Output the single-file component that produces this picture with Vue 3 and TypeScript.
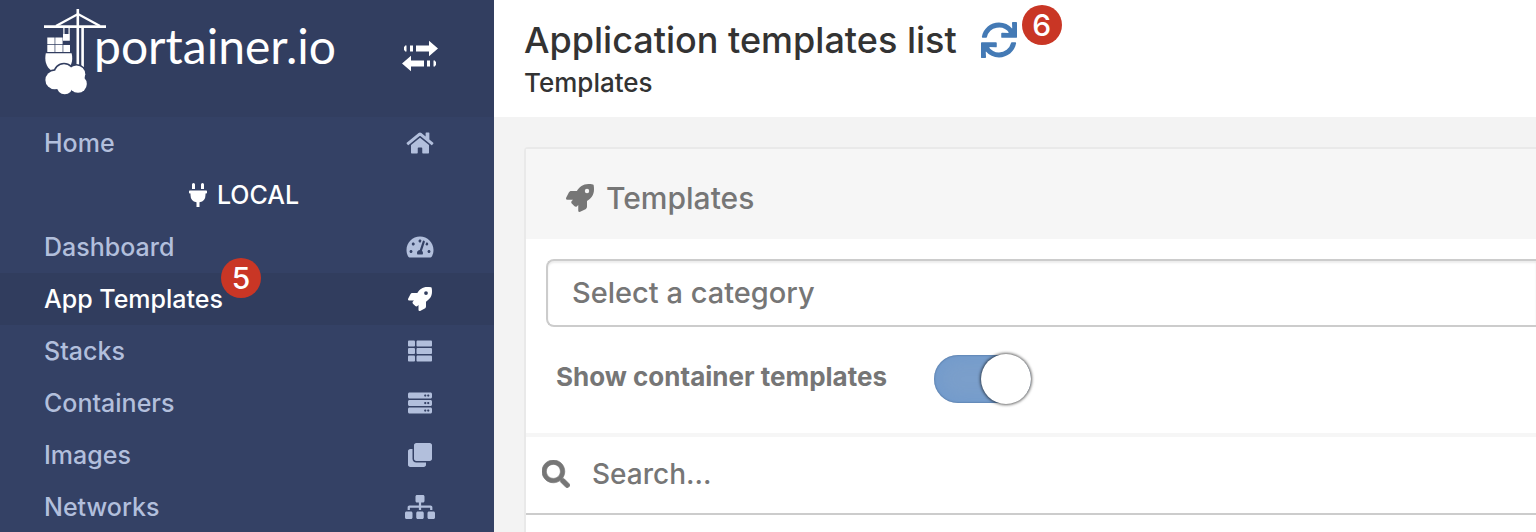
<script setup lang="ts">
import { ref } from 'vue'

interface Glyph {
  w: number
  d: string
}

interface NavItem {
  label: string
  icon: string
  badge?: string
}

const rocket: Glyph = {
  w: 512,
  d: 'M505.12019,19.09375c-1.18945-5.53125-6.65819-11-12.207-12.1875C460.716,0,435.507,0,410.40747,0,307.17523,0,245.26909,55.20312,199.05238,128H94.83772c-16.34763.01562-35.55658,11.875-42.88664,26.48438L2.51562,253.29688A28.4,28.4,0,0,0,0,264a24.00867,24.00867,0,0,0,24.00582,24H127.81618l-22.47457,22.46875c-11.36521,11.36133-12.99607,32.25781,0,45.25L156.24582,406.625c11.15623,11.1875,32.15619,13.15625,45.27726,0l22.47457-22.46875V488a24.00867,24.00867,0,0,0,24.00581,24,28.55934,28.55934,0,0,0,10.707-2.51562l98.72834-49.39063c14.62888-7.29687,26.50776-26.5,26.50776-42.85937V312.79688c72.59753-46.3125,128.03493-108.40626,128.03493-211.09376C512.07526,76.5,512.07526,51.29688,505.12019,19.09375ZM384.04033,168A40,40,0,1,1,424.05,128,40.02322,40.02322,0,0,1,384.04033,168Z'
}

const icons: Record<string, Glyph> = {
  home: {
    w: 576,
    d: 'M280.37 148.26L96 300.11V464a16 16 0 0 0 16 16l112.06-.29a16 16 0 0 0 15.92-16V368a16 16 0 0 1 16-16h64a16 16 0 0 1 16 16v95.64a16 16 0 0 0 16 16.05L464 480a16 16 0 0 0 16-16V300L295.67 148.26a12.19 12.19 0 0 0-15.3 0zM571.6 251.47L488 182.56V44.05a12 12 0 0 0-12-12h-56a12 12 0 0 0-12 12v72.61L318.47 43a48 48 0 0 0-61 0L4.34 251.47a12 12 0 0 0-1.6 16.9l25.5 31A12 12 0 0 0 45.15 301l235.22-193.74a12.19 12.19 0 0 1 15.3 0L530.9 301a12 12 0 0 0 16.9-1.6l25.5-31a12 12 0 0 0-1.7-16.93z'
  },
  dashboard: {
    w: 576,
    d: 'M288 32C128.94 32 0 160.94 0 320c0 52.8 14.25 102.26 39.06 144.8 5.61 9.62 16.3 15.2 27.44 15.2h443c11.14 0 21.83-5.58 27.44-15.2C561.75 422.26 576 372.8 576 320c0-159.06-128.94-288-288-288zm0 64c14.71 0 26.58 10.13 30.32 23.65-1.11 2.26-2.64 4.23-3.45 6.67l-9.22 27.67c-5.13 3.49-10.97 6.01-17.64 6.01-17.67 0-32-14.33-32-32S270.33 96 288 96zM96 384c-17.67 0-32-14.33-32-32s14.33-32 32-32 32 14.33 32 32-14.33 32-32 32zm48-160c-17.67 0-32-14.33-32-32s14.33-32 32-32 32 14.33 32 32-14.33 32-32 32zm246.77-72.41l-61.33 184C343.13 347.33 352 364.54 352 384c0 11.72-3.38 22.55-8.88 32H232.88c-5.5-9.45-8.88-20.28-8.88-32 0-33.94 26.5-61.43 59.9-63.59l61.34-184.01c4.17-12.56 17.73-19.45 30.36-15.17 12.57 4.19 19.35 17.79 15.17 30.36zm14.66 57.2l15.52-46.55c3.47-1.29 7.13-2.23 11.05-2.23 17.67 0 32 14.33 32 32s-14.33 32-32 32c-11.38-.01-20.89-6.28-26.57-15.22zM480 384c-17.67 0-32-14.33-32-32s14.33-32 32-32 32 14.33 32 32-14.33 32-32 32z'
  },
  rocket,
  list: {
    w: 512,
    d: 'M149.333 216v80c0 13.255-10.745 24-24 24H24c-13.255 0-24-10.745-24-24v-80c0-13.255 10.745-24 24-24h101.333c13.255 0 24 10.745 24 24zM0 376v80c0 13.255 10.745 24 24 24h101.333c13.255 0 24-10.745 24-24v-80c0-13.255-10.745-24-24-24H24c-13.255 0-24 10.745-24 24zM125.333 32H24C10.745 32 0 42.745 0 56v80c0 13.255 10.745 24 24 24h101.333c13.255 0 24-10.745 24-24V56c0-13.255-10.745-24-24-24zm80 448H488c13.255 0 24-10.745 24-24v-80c0-13.255-10.745-24-24-24H205.333c-13.255 0-24 10.745-24 24v80c0 13.255 10.745 24 24 24zm-24-424v80c0 13.255 10.745 24 24 24H488c13.255 0 24-10.745 24-24V56c0-13.255-10.745-24-24-24H205.333c-13.255 0-24 10.745-24 24zm24 264H488c13.255 0 24-10.745 24-24v-80c0-13.255-10.745-24-24-24H205.333c-13.255 0-24 10.745-24 24v80c0 13.255 10.745 24 24 24z'
  },
  server: {
    w: 512,
    d: 'M480 160H32c-17.673 0-32-14.327-32-32V64c0-17.673 14.327-32 32-32h448c17.673 0 32 14.327 32 32v64c0 17.673-14.327 32-32 32zm-48-88c-13.255 0-24 10.745-24 24s10.745 24 24 24 24-10.745 24-24-10.745-24-24-24zm-64 0c-13.255 0-24 10.745-24 24s10.745 24 24 24 24-10.745 24-24-10.745-24-24-24zm112 248H32c-17.673 0-32-14.327-32-32v-64c0-17.673 14.327-32 32-32h448c17.673 0 32 14.327 32 32v64c0 17.673-14.327 32-32 32zm-48-88c-13.255 0-24 10.745-24 24s10.745 24 24 24 24-10.745 24-24-10.745-24-24-24zm-64 0c-13.255 0-24 10.745-24 24s10.745 24 24 24 24-10.745 24-24-10.745-24-24-24zm112 248H32c-17.673 0-32-14.327-32-32v-64c0-17.673 14.327-32 32-32h448c17.673 0 32 14.327 32 32v64c0 17.673-14.327 32-32 32zm-48-88c-13.255 0-24 10.745-24 24s10.745 24 24 24 24-10.745 24-24-10.745-24-24-24zm-64 0c-13.255 0-24 10.745-24 24s10.745 24 24 24 24-10.745 24-24-10.745-24-24-24z'
  },
  clone: {
    w: 512,
    d: 'M464 0c26.51 0 48 21.49 48 48v288c0 26.51-21.49 48-48 48H176c-26.51 0-48-21.49-48-48V48c0-26.51 21.49-48 48-48h288M176 416c-44.112 0-80-35.888-80-80V128H48c-26.51 0-48 21.49-48 48v288c0 26.51 21.49 48 48 48h288c26.51 0 48-21.49 48-48v-48H176z'
  },
  sitemap: {
    w: 640,
    d: 'M128 352H32c-17.67 0-32 14.33-32 32v96c0 17.67 14.33 32 32 32h96c17.67 0 32-14.33 32-32v-96c0-17.67-14.33-32-32-32zm-24-80h192v48h48v-48h192v48h48v-57.59c0-21.17-17.23-38.41-38.41-38.41H344v-64h40c17.67 0 32-14.33 32-32V32c0-17.67-14.33-32-32-32H256c-17.67 0-32 14.33-32 32v96c0 17.67 14.33 32 32 32h40v64H94.41C73.23 224 56 241.23 56 262.41V320h48v-48zm264 80h-96c-17.67 0-32 14.33-32 32v96c0 17.67 14.33 32 32 32h96c17.67 0 32-14.33 32-32v-96c0-17.67-14.33-32-32-32zm240 0h-96c-17.67 0-32 14.33-32 32v96c0 17.67 14.33 32 32 32h96c17.67 0 32-14.33 32-32v-96c0-17.67-14.33-32-32-32z'
  }
}

const homeItems: NavItem[] = [{ label: 'Home', icon: 'home' }]
const localItems: NavItem[] = [
  { label: 'Dashboard', icon: 'dashboard' },
  { label: 'App Templates', icon: 'rocket', badge: '5' },
  { label: 'Stacks', icon: 'list' },
  { label: 'Containers', icon: 'server' },
  { label: 'Images', icon: 'clone' },
  { label: 'Networks', icon: 'sitemap' }
]

const active = ref('App Templates')
const category = ref('')
const showContainers = ref(true)
const search = ref('')
</script>

<template>
  <div class="app">
    <aside class="sidebar">
      <header class="brand">
        <a href="#" class="logo" aria-label="portainer.io">
          <svg class="crane" viewBox="0 0 62 88" fill="currentColor" aria-hidden="true">
            <path d="M0 17.300h62v2.600H0z" />
            <path d="M32.500 1h2.600v57h-2.600zM37.300 19h2.600v40h-2.600z" />
            <path d="M12 18 34 6l22 12" fill="none" stroke="currentColor" stroke-width="2.400" />
            <path d="M19.300 19h1.200v7h-1.200zM24.500 19h1.200v7h-1.200zM19 26h6.800v6.800H19zM3.300 29.500h7.300v6.800H3.300zM11.300 29.500h7.300v6.800h-7.300zM3.300 37h7.300v7H3.300zM11.300 37h7.300v7h-7.300zM19.300 37H26v7h-6.700z" />
            <path d="M1.800 45.300h25.800C29.500 53 27 59 22 63H8C1.500 59 .5 52 1.800 45.300z" />
            <g class="cloud-edge">
              <circle cx="10.700" cy="72" r="9.300" />
              <circle cx="20" cy="65.500" r="9.300" />
              <circle cx="32.500" cy="66.300" r="8.800" />
              <circle cx="34" cy="76" r="8.800" />
              <circle cx="20.700" cy="78.300" r="8" />
            </g>
            <circle cx="10.700" cy="72" r="9.300" />
            <circle cx="20" cy="65.500" r="9.300" />
            <circle cx="32.500" cy="66.300" r="8.800" />
            <circle cx="34" cy="76" r="8.800" />
            <circle cx="20.700" cy="78.300" r="8" />
            <path d="M12 66h20v14H12z" />
          </svg>
          <span class="wordmark">portainer.io</span>
        </a>
        <button type="button" class="collapse" aria-label="Toggle sidebar">
          <svg viewBox="0 0 36 32" fill="currentColor" aria-hidden="true">
            <path d="M3 5.500h1.500v6H3v-1H2v-4h1zM8 5.500h3v6H8zM14 5.500h13V.8L36 8.500l-9 7.700v-4.700H14z" />
            <path d="M33 20.500h-1.500v6H33v-1h1v-4h-1zM28 20.500h-3v6h3zM22 20.500H9v-4.700L0 23.500l9 7.700v-4.700h13z" />
          </svg>
        </button>
      </header>

      <nav class="nav">
        <a
          v-for="item in homeItems"
          :key="item.label"
          href="#"
          class="item"
          :class="{ active: active === item.label }"
          @click.prevent="active = item.label"
        >
          <span class="name">{{ item.label }}</span>
          <svg class="glyph" :viewBox="`0 0 ${icons[item.icon].w} 512`" fill="currentColor" aria-hidden="true">
            <path :d="icons[item.icon].d" />
          </svg>
        </a>

        <div class="endpoint">
          <svg class="plug" viewBox="0 0 384 512" fill="currentColor" aria-hidden="true">
            <path d="M320,32a32,32,0,0,0-64,0v96h64Zm48,128H16A16,16,0,0,0,0,176v32a16,16,0,0,0,16,16H32v32A160.070,160.070,0,0,0,160,412.800V512h64V412.800A160.070,160.070,0,0,0,352,256V224h16a16,16,0,0,0,16-16V176A16,16,0,0,0,368,160ZM128,32a32,32,0,0,0-64,0v96h64Z" />
          </svg>
          <span>LOCAL</span>
        </div>

        <a
          v-for="item in localItems"
          :key="item.label"
          href="#"
          class="item"
          :class="{ active: active === item.label }"
          @click.prevent="active = item.label"
        >
          <span class="name">
            {{ item.label }}
            <span v-if="item.badge" class="badge badge-nav">{{ item.badge }}</span>
          </span>
          <svg class="glyph" :viewBox="`0 0 ${icons[item.icon].w} 512`" fill="currentColor" aria-hidden="true">
            <path :d="icons[item.icon].d" />
          </svg>
        </a>
      </nav>
    </aside>

    <main class="content">
      <header class="page-head">
        <div class="title-row">
          <h1>Application templates list</h1>
          <button type="button" class="refresh" aria-label="Refresh">
            <svg viewBox="0 0 512 512" fill="currentColor" aria-hidden="true">
              <path d="M440.650 12.570l4 82.770A247.160 247.160 0 0 0 255.830 8C134.730 8 33.910 94.920 12.290 209.820A12 12 0 0 0 24.090 224h49.050a12 12 0 0 0 11.670-9.260 175.910 175.910 0 0 1 317-56.940l-101.460-4.860a12 12 0 0 0-12.570 12v47.410a12 12 0 0 0 12 12H500a12 12 0 0 0 12-12V12a12 12 0 0 0-12-12h-47.370a12 12 0 0 0-11.980 12.570zM255.830 432a175.610 175.610 0 0 1-146-77.800l101.800 4.870a12 12 0 0 0 12.570-12v-47.400a12 12 0 0 0-12-12H12a12 12 0 0 0-12 12V500a12 12 0 0 0 12 12h47.350a12 12 0 0 0 12-12.600l-4.150-82.570A247.170 247.170 0 0 0 255.830 504c121.110 0 221.930-86.920 243.550-201.820a12 12 0 0 0-11.800-14.180h-49.050a12 12 0 0 0-11.670 9.260A175.860 175.860 0 0 1 255.830 432z" />
              <path d="M500 40v172H330zM12 472V300h170z" />
            </svg>
            <span class="badge badge-refresh">6</span>
          </button>
        </div>
        <div class="crumb">Templates</div>
      </header>

      <section class="panel">
        <h2 class="panel-head">
          <svg class="head-icon" viewBox="0 0 512 512" fill="currentColor" aria-hidden="true">
            <path :d="rocket.d" />
          </svg>
          <span>Templates</span>
        </h2>

        <div class="filters">
          <select v-model="category" class="category" aria-label="Category">
            <option value="">Select a category</option>
          </select>
          <div class="toggle-row">
            <label for="show-containers">Show container templates</label>
            <input id="show-containers" v-model="showContainers" type="checkbox" class="switch" />
          </div>
        </div>

        <div class="search-row">
          <svg class="search-icon" viewBox="0 0 512 512" fill="currentColor" aria-hidden="true">
            <path stroke="currentColor" stroke-width="12" d="M505 442.700L405.300 343c-4.500-4.500-10.600-7-17-7H372c27.600-35.300 44-79.700 44-128C416 93.100 322.900 0 208 0S0 93.100 0 208s93.100 208 208 208c48.300 0 92.700-16.400 128-44v16.300c0 6.400 2.500 12.500 7 17l99.700 99.700c9.400 9.400 24.600 9.400 33.900 0l28.300-28.300c9.400-9.400 9.400-24.600.1-34zM208 336c-70.700 0-128-57.200-128-128 0-70.700 57.200-128 128-128 70.700 0 128 57.200 128 128 0 70.700-57.200 128-128 128z" />
          </svg>
          <input v-model="search" type="text" class="search" placeholder="Search..." aria-label="Search" />
        </div>
      </section>
    </main>
  </div>
</template>

<style>
body {
  margin: 0;
  background: #f3f3f3;
  overflow: hidden;
}
</style>

<style scoped>
.app,
.app * {
  box-sizing: border-box;
}

.app {
  display: flex;
  min-height: 100vh;
  font-family: Inter, "Liberation Sans", sans-serif;
  font-weight: 500;
  color: #333;
}

button {
  padding: 0;
  border: 0;
  background: none;
  font: inherit;
  cursor: pointer;
}

.sidebar {
  flex: 0 0 494px;
  background: #344165;
}

.brand {
  display: flex;
  justify-content: space-between;
  align-items: flex-start;
  height: 117px;
  padding: 8px 56px 0 44px;
  background: #323e60;
  color: #fff;
}

.logo {
  display: flex;
  color: inherit;
  text-decoration: none;
}

.crane {
  width: 62px;
  height: 88px;
}

.cloud-edge {
  stroke: #323e60;
  stroke-width: 3;
}

.wordmark {
  margin-left: -12px;
  padding-top: 8px;
  font: 400 48px/60px "Lato", "Open Sans", sans-serif;
}

.collapse {
  margin-top: 32px;
  color: #fff;
}

.collapse svg {
  display: block;
  width: 36px;
  height: 32px;
}

.item,
.endpoint {
  display: flex;
  align-items: center;
  height: 52px;
  font-size: 25px;
  line-height: 32px;
}

.item {
  justify-content: space-between;
  padding: 0 59px 0 44px;
  color: #b2bfdc;
  text-decoration: none;
}

.item.active {
  background: #313d5e;
  color: #fff;
}

.name {
  position: relative;
}

.glyph {
  height: 24px;
  width: 30px;
}

.endpoint {
  justify-content: center;
  gap: 10px;
  padding-right: 6px;
  color: #fff;
}

.plug {
  width: 18px;
  height: 24px;
}

.badge {
  position: absolute;
  width: 40px;
  height: 40px;
  border-radius: 50%;
  background: #c93625;
  color: #fff;
  font-size: 30px;
  line-height: 40px;
  text-align: center;
}

.badge-nav {
  left: 177px;
  top: -25px;
}

.badge-refresh {
  left: 41px;
  top: -17px;
}

.content {
  flex: 1;
  min-width: 0;
  display: flex;
  flex-direction: column;
}

.page-head {
  height: 117px;
  padding: 16px 30px 0;
  background: #fff;
}

.title-row {
  display: flex;
  align-items: center;
  gap: 24px;
}

h1,
h2 {
  margin: 0;
  font-weight: 500;
}

h1 {
  font-size: 36px;
  line-height: 48px;
}

.refresh {
  position: relative;
  color: #447ab5;
}

.refresh svg {
  display: block;
  width: 36px;
  height: 36px;
}

.crumb {
  padding-top: 3px;
  font-size: 26px;
  line-height: 32px;
}

.panel {
  flex: 1;
  margin: 30px 0 0 30px;
  border: 2px solid #e9e9e9;
  border-width: 2px 0 0 2px;
  border-top-left-radius: 4px;
  background: #fff;
  color: #767676;
  font-size: 28px;
}

.panel-head {
  display: flex;
  align-items: center;
  gap: 12px;
  height: 90px;
  padding: 8px 40px 0;
  background: #f6f6f6;
  font-size: 30px;
  line-height: 40px;
}

.head-icon {
  width: 28px;
  height: 28px;
}

.filters {
  height: 198px;
  padding: 20px 0 0 20px;
  border-bottom: 4px solid #f6f6f6;
}

.category {
  display: block;
  width: 100%;
  height: 68px;
  padding: 0 24px 2px;
  border: 2px solid #ccc;
  border-right: 0;
  border-radius: 8px 0 0 8px;
  background: #fff;
  box-shadow: inset 0 2px 2px rgba(0, 0, 0, 0.08);
  appearance: none;
  color: inherit;
  font: inherit;
  font-size: 29px;
}

.toggle-row {
  display: flex;
  align-items: flex-end;
  gap: 47px;
  padding: 28px 0 0 10px;
}

.toggle-row label {
  padding-bottom: 10px;
  font-size: 26px;
  font-weight: 700;
  line-height: 32px;
}

.switch {
  position: relative;
  width: 97px;
  height: 48px;
  margin: 0;
  border-radius: 24px;
  background: #7b9fcb;
  box-shadow: inset 0 0 2px rgba(30, 60, 100, 0.6), inset 0 0 20px rgba(80, 140, 210, 0.3);
  appearance: none;
  cursor: pointer;
}

.switch::after {
  content: "";
  position: absolute;
  top: -1px;
  left: 0;
  width: 50px;
  height: 50px;
  border-radius: 50%;
  background: #fff;
  box-shadow: 0 0 3px 1px rgba(0, 0, 0, 0.6);
}

.switch:checked::after {
  left: 47px;
}

.search-row {
  display: flex;
  align-items: center;
  gap: 22px;
  height: 78px;
  padding: 0 0 2px 16px;
  border-bottom: 2px solid #ccc;
}

.search-icon {
  flex: none;
  width: 28px;
  height: 28px;
}

.search {
  flex: 1;
  min-width: 0;
  padding: 0;
  border: 0;
  outline: 0;
  background: none;
  color: inherit;
  font: inherit;
  line-height: 40px;
}

.search::placeholder {
  color: #767676;
  opacity: 1;
}
</style>
